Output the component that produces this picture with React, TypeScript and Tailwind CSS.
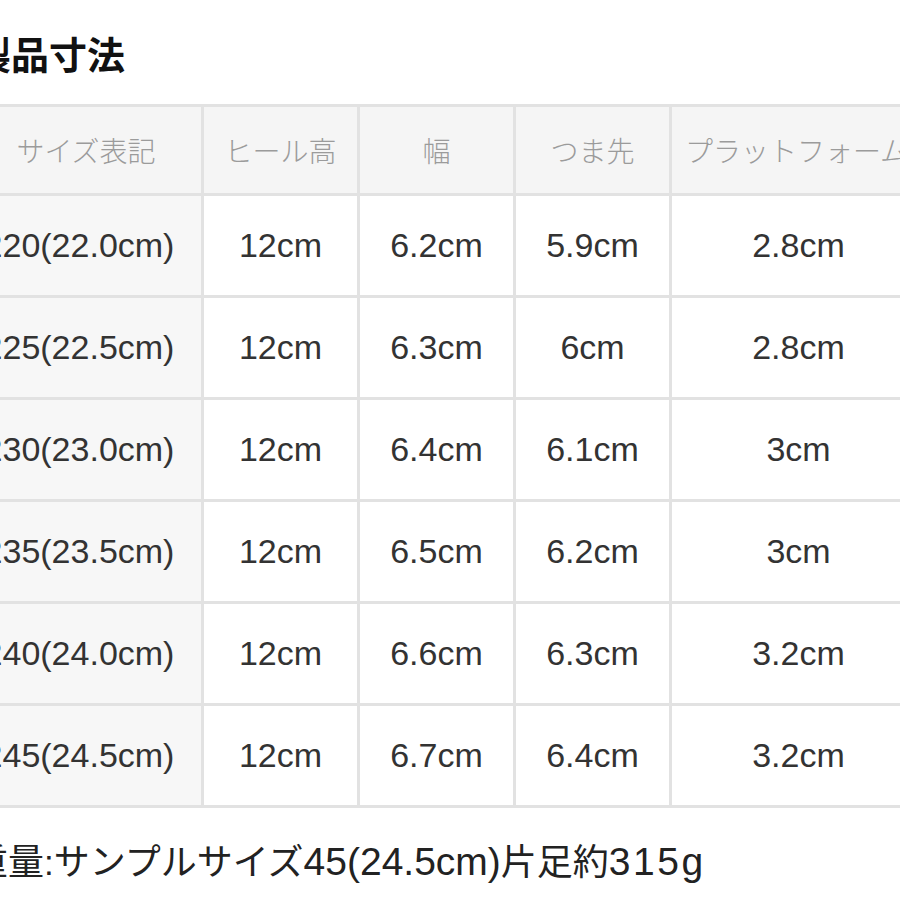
import React from "react";

const headers = ["サイズ表記", "ヒール高", "幅", "つま先", "プラットフォーム高"];
const rows = [
  ["220(22.0cm)", "12cm", "6.2cm", "5.9cm", "2.8cm"],
  ["225(22.5cm)", "12cm", "6.3cm", "6cm", "2.8cm"],
  ["230(23.0cm)", "12cm", "6.4cm", "6.1cm", "3cm"],
  ["235(23.5cm)", "12cm", "6.5cm", "6.2cm", "3cm"],
  ["240(24.0cm)", "12cm", "6.6cm", "6.3cm", "3.2cm"],
  ["245(24.5cm)", "12cm", "6.7cm", "6.4cm", "3.2cm"],
];

const latin = { fontFamily: '"Liberation Sans", "Noto Sans CJK JP", sans-serif' };

export default function App() {
  return (
    <div
      className="w-[900px] h-[900px] overflow-hidden bg-white"
      style={{ fontFamily: '"Noto Sans CJK JP", "Noto Sans", sans-serif' }}
    >
      <div className="ml-[-27px] pt-[30px] h-[104px] text-[38px] leading-[46px] font-bold text-[#111] whitespace-nowrap">
        製品寸法
      </div>
      <div className="ml-[-32px] w-[960px] p-[3px] bg-[#e2e2e2] grid grid-cols-[230px_153px_153px_153px_253px] grid-rows-[86px_repeat(6,99px)] gap-[3px]">
        {headers.map((h, i) => (
          <div
            key={i}
            className={
              "bg-[#f5f5f5] flex items-center justify-center text-[28px] font-light text-[#9b9b9b] whitespace-nowrap overflow-hidden " +
              (i === 4 ? "pl-[24px]" : "")
            }
          >
            {h}
          </div>
        ))}
        {rows.map((r, ri) =>
          r.map((c, ci) => (
            <div
              key={ri + "-" + ci}
              style={latin}
              className={
                "flex items-center justify-center text-[34px] text-[#333] whitespace-nowrap " +
                (ci === 0 ? "bg-[#f7f7f7] pr-[14px]" : "bg-white")
              }
            >
              {c}
            </div>
          ))
        )}
      </div>
      <div
        style={latin}
        className="ml-[-28px] mt-[32px] text-[36px] leading-[44px] text-[#222] whitespace-nowrap flex items-baseline"
      >
        <span>重量</span>
        <span className="text-[35px]">:</span>
        <span>サンプルサイズ</span>
        <span className="text-[39px]">45(24.5cm)</span>
        <span>片足約</span>
        <span className="text-[39px] tracking-[2.5px]">315g</span>
      </div>
    </div>
  );
}
